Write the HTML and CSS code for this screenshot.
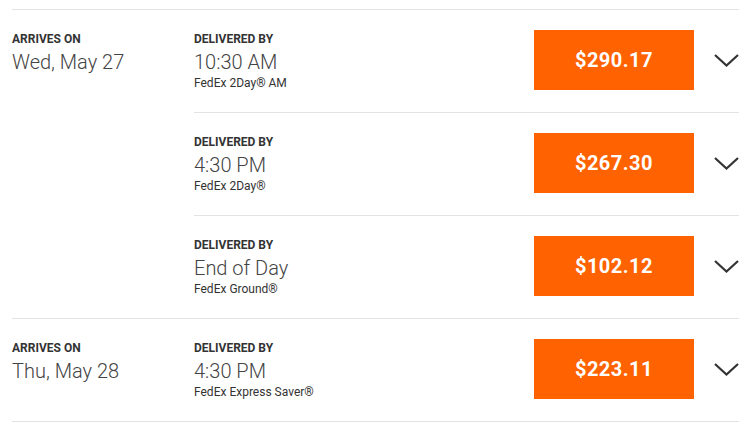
FILE: index.html
```html
<!DOCTYPE html>
<html>
<head>
<meta charset="utf-8">
<link rel="stylesheet" href="styles.css">
</head>
<body>
<div class="list">
  <div class="group">
    <div class="arrive">
      <div class="label">Arrives on</div>
      <div class="date">Wed, May 27</div>
    </div>
    <div class="options">
      <div class="option">
        <div class="info">
          <div class="label">Delivered by</div>
          <div class="time">10:30 AM</div>
          <div class="service">FedEx 2Day® AM</div>
        </div>
        <div class="price">$290.17</div>
        <div class="chev"><svg width="25" height="13" viewBox="0 0 25 13"><polyline points="1,1 12.5,11.5 24,1" fill="none" stroke="#333" stroke-width="2.2"/></svg></div>
      </div>
      <div class="option">
        <div class="info">
          <div class="label">Delivered by</div>
          <div class="time">4:30 PM</div>
          <div class="service">FedEx 2Day®</div>
        </div>
        <div class="price">$267.30</div>
        <div class="chev"><svg width="25" height="13" viewBox="0 0 25 13"><polyline points="1,1 12.5,11.5 24,1" fill="none" stroke="#333" stroke-width="2.2"/></svg></div>
      </div>
      <div class="option">
        <div class="info">
          <div class="label">Delivered by</div>
          <div class="time">End of Day</div>
          <div class="service">FedEx Ground®</div>
        </div>
        <div class="price">$102.12</div>
        <div class="chev"><svg width="25" height="13" viewBox="0 0 25 13"><polyline points="1,1 12.5,11.5 24,1" fill="none" stroke="#333" stroke-width="2.2"/></svg></div>
      </div>
    </div>
  </div>
  <div class="group last">
    <div class="arrive">
      <div class="label">Arrives on</div>
      <div class="date">Thu, May 28</div>
    </div>
    <div class="options">
      <div class="option">
        <div class="info">
          <div class="label">Delivered by</div>
          <div class="time">4:30 PM</div>
          <div class="service">FedEx Express Saver®</div>
        </div>
        <div class="price">$223.11</div>
        <div class="chev"><svg width="25" height="13" viewBox="0 0 25 13"><polyline points="1,1 12.5,11.5 24,1" fill="none" stroke="#333" stroke-width="2.2"/></svg></div>
      </div>
    </div>
  </div>
</div>
</body>
</html>
```
FILE: styles.css
```css
html, body {
  margin: 0;
  padding: 0;
  background: #fff;
}
body {
  font-family: Roboto, "Liberation Sans", sans-serif;
  color: #333;
  padding-top: 9px;
}
.list {
  margin-left: 12px;
  width: 727px;
}
.group {
  display: flex;
  border-top: 1px solid #e3e3e3;
}
.group.last {
  border-bottom: 1px solid #e3e3e3;
}
.arrive {
  width: 182px;
  padding-top: 22px;
}
.options {
  flex: 1;
}
.option {
  display: flex;
  align-items: flex-start;
  padding: 20px 0 22px;
}
.option + .option {
  border-top: 1px solid #e3e3e3;
}
.label {
  font-size: 12px;
  line-height: 14px;
  font-weight: 700;
  text-transform: uppercase;
  color: #333;
}
.date, .time {
  font-size: 20px;
  line-height: 24px;
  font-weight: 300;
  color: #444;
  margin-top: 4px;
}
.service {
  font-size: 12px;
  line-height: 14px;
  margin-top: 2px;
  color: #333;
}
.info {
  flex: 1;
  padding-top: 2px;
  height: 58px;
}
.price {
  width: 160px;
  height: 60px;
  background: #ff6200;
  color: #fff;
  font-size: 20px;
  font-weight: 700;
  letter-spacing: 0.5px;
  display: flex;
  align-items: center;
  justify-content: center;
}
.chev {
  width: 45px;
  height: 60px;
  display: flex;
  align-items: center;
  justify-content: flex-end;
}
.chev svg {
  display: block;
}
```
